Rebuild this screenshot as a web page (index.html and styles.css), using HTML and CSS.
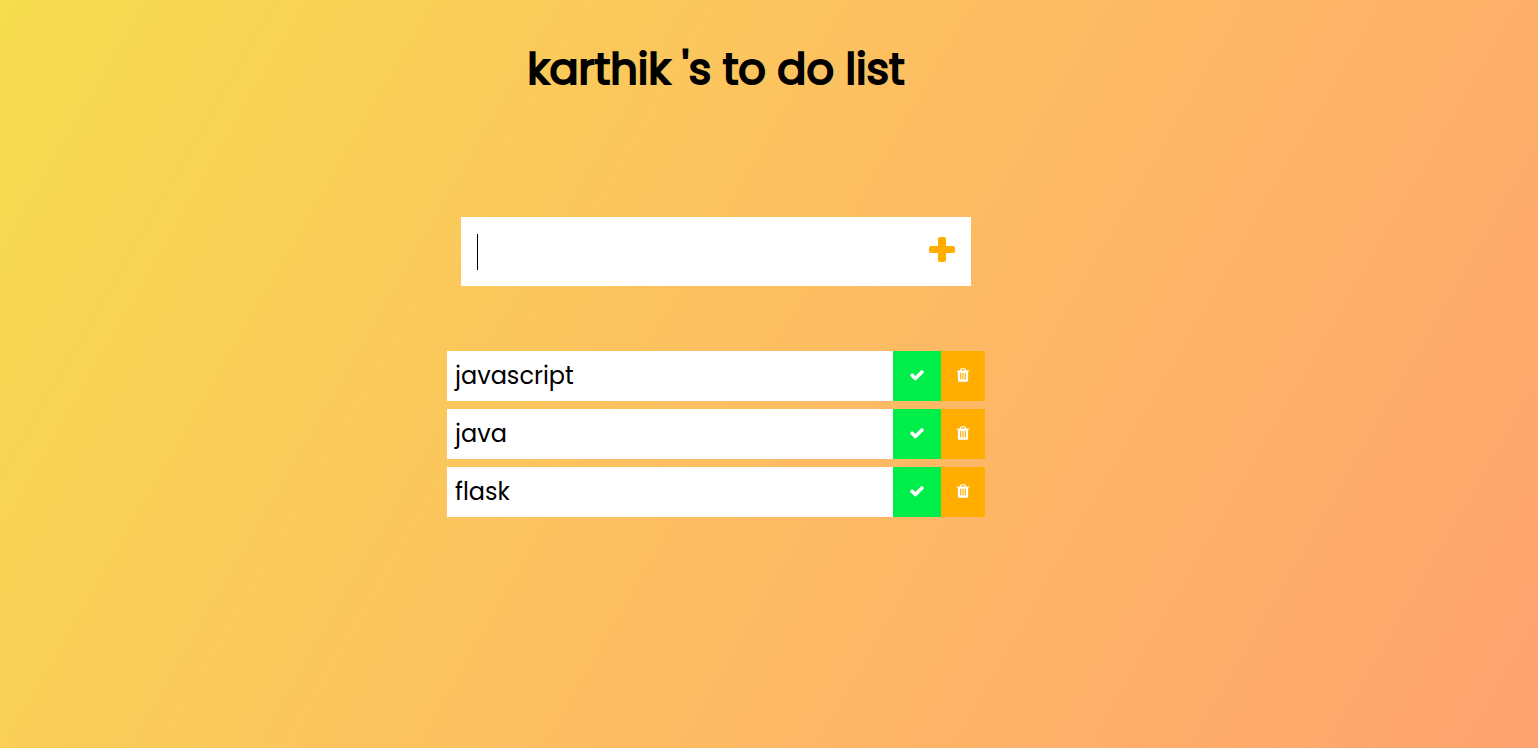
FILE: index.html
```html
<!DOCTYPE html>
<html lang="en">
<head>
<meta charset="utf-8">
<meta name="viewport" content="width=device-width, initial-scale=1">
<title>To do list</title>
<link rel="stylesheet" href="styles.css">
</head>
<body>
<svg class="sprite" aria-hidden="true">
  <symbol id="plus" viewBox="0 0 26 26"><path d="M11 0h4a2 2 0 0 1 2 2v7h7a2 2 0 0 1 2 2v3a2 2 0 0 1-2 2h-7v7a2 2 0 0 1-2 2h-4a2 2 0 0 1-2-2v-7H2a2 2 0 0 1-2-2v-3a2 2 0 0 1 2-2h7V2a2 2 0 0 1 2-2z"/></symbol>
  <symbol id="check" viewBox="0 0 1792 1792"><path d="M1671 566q0 40-28 68l-724 724-136 136q-28 28-68 28t-68-28l-136-136-362-362q-28-28-28-68t28-68l136-136q28-28 68-28t68 28l294 295 656-657q28-28 68-28t68 28l136 136q28 28 28 68z"/></symbol>
  <symbol id="trash" viewBox="0 0 1792 1792"><path d="M704 1376v-704q0-14-9-23t-23-9h-64q-14 0-23 9t-9 23v704q0 14 9 23t23 9h64q14 0 23-9t9-23zm256 0v-704q0-14-9-23t-23-9h-64q-14 0-23 9t-9 23v704q0 14 9 23t23 9h64q14 0 23-9t9-23zm256 0v-704q0-14-9-23t-23-9h-64q-14 0-23 9t-9 23v704q0 14 9 23t23 9h64q14 0 23-9t9-23zm-544-992h448l-48-117q-7-9-17-11h-317q-10 2-17 11zm928 32v64q0 14-9 23t-23 9h-96v948q0 83-47 143.500t-113 60.500h-832q-66 0-113-58.500t-47-141.500v-952h-96q-14 0-23-9t-9-23v-64q0-14 9-23t23-9h309l70-167q15-37 54-63t79-26h320q40 0 79 26t54 63l70 167h309q14 0 23 9t9 23z"/></symbol>
</svg>
<div class="page">
  <header class="header"><h1 class="title">karthik 's to do list</h1></header>
  <form class="entry">
    <span class="caret"></span>
    <input class="entry-input" type="text" aria-label="New task">
    <button class="entry-add" type="button" aria-label="Add task"><svg class="icon-plus"><use href="#plus"/></svg></button>
  </form>
  <ul class="list">
    <li class="item">
      <span class="item-text">javascript</span>
      <button class="action done" type="button" aria-label="Complete javascript"><svg class="icon"><use href="#check"/></svg></button>
      <button class="action remove" type="button" aria-label="Delete javascript"><svg class="icon"><use href="#trash"/></svg></button>
    </li>
    <li class="item">
      <span class="item-text">java</span>
      <button class="action done" type="button" aria-label="Complete java"><svg class="icon"><use href="#check"/></svg></button>
      <button class="action remove" type="button" aria-label="Delete java"><svg class="icon"><use href="#trash"/></svg></button>
    </li>
    <li class="item">
      <span class="item-text">flask</span>
      <button class="action done" type="button" aria-label="Complete flask"><svg class="icon"><use href="#check"/></svg></button>
      <button class="action remove" type="button" aria-label="Delete flask"><svg class="icon"><use href="#trash"/></svg></button>
    </li>
  </ul>
</div>
</body>
</html>
```
FILE: styles.css
```css
* {
  box-sizing: border-box;
  margin: 0;
  padding: 0;
}

body {
  min-height: 100vh;
  background: linear-gradient(120deg, #f6dc4e, #fdbe62 50%, #ffa26f);
  color: #000;
  font-family: Poppins, Inter, sans-serif;
}

.sprite {
  position: absolute;
  width: 0;
  height: 0;
}

.page {
  display: flex;
  flex-direction: column;
  align-items: center;
  padding: 32px 106px 32px 0;
}

.title {
  font-size: 43px;
  font-weight: 400;
  line-height: 74px;
  -webkit-text-stroke: 2px #000;
}

.entry {
  display: flex;
  align-items: center;
  width: 100%;
  max-width: 510px;
  margin-top: 111px;
  padding: 16px;
  background: #fff;
}

.caret {
  width: 1px;
  height: 36px;
  background: #000;
}

.entry-input {
  flex: 1;
  min-width: 0;
  height: 37px;
  border: 0;
  outline: 0;
  background: transparent;
  font: inherit;
  font-size: 24px;
}

.entry-add {
  display: flex;
  border: 0;
  padding-bottom: 4px;
  background: transparent;
  color: #ffae00;
  cursor: pointer;
}

.icon-plus {
  width: 26px;
  height: 26px;
  fill: currentColor;
}

.list {
  display: flex;
  flex-direction: column;
  gap: 8px;
  width: 100%;
  max-width: 538px;
  margin-top: 65px;
  list-style: none;
}

.item {
  display: flex;
  height: 50px;
  background: #fff;
}

.item-text {
  flex: 1;
  padding: 0 8px;
  font-size: 24px;
  line-height: 50px;
}

.action {
  display: flex;
  align-items: center;
  justify-content: center;
  border: 0;
  padding-bottom: 2px;
  color: #fff;
  cursor: pointer;
}

.done {
  width: 48px;
  background: #00ee49;
}

.remove {
  width: 44px;
  background: #ffae00;
}

.icon {
  width: 16px;
  height: 16px;
  fill: currentColor;
}
```
